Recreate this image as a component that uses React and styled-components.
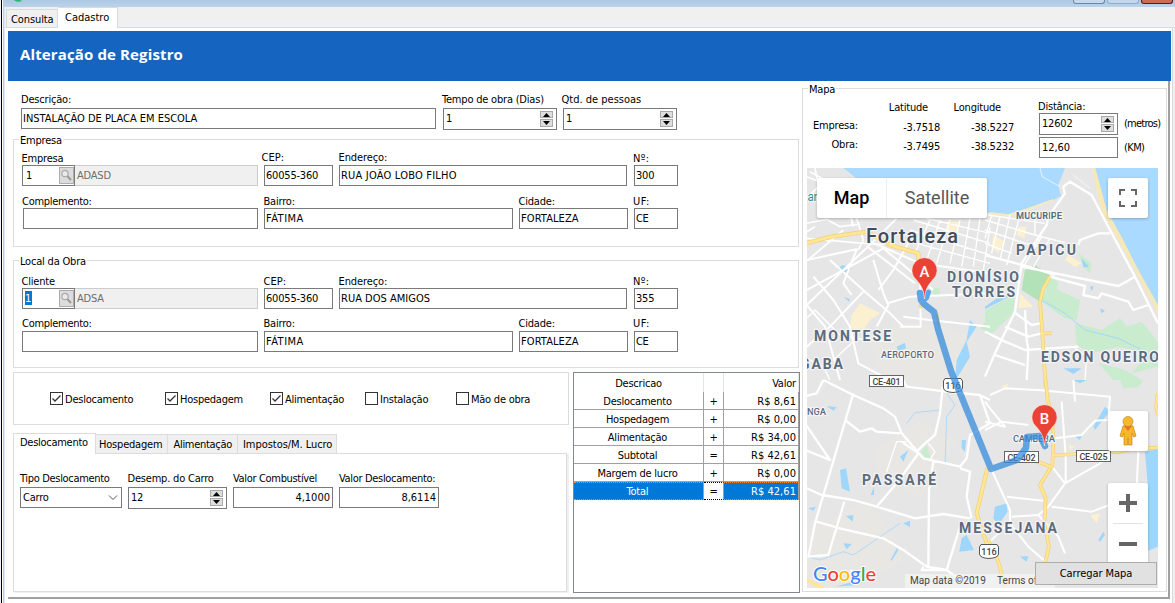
import React from "react";
import styled, { createGlobalStyle, css } from "styled-components";

const Global = createGlobalStyle`
  * { box-sizing: border-box; }
  html, body { margin: 0; padding: 0; overflow: hidden; }
  body {
    width: 1175px; height: 603px; background: #fff; color: #000;
    font: 11px/14px "DejaVu Sans Condensed", "DejaVu Sans", sans-serif;
    letter-spacing: -0.2px;
  }
`;

/* ---------- window chrome ---------- */
const Window = styled.div`
  width: 1175px; height: 603px; display: flex; overflow: hidden; background: #fff;
`;
const LeftEdge = styled.div`
  width: 5px; flex: none; border-left: 1px solid #f4f4f4;
  background: linear-gradient(90deg, #000 0 1px, #fff 1px 2px, #b9cfe4 2px 3px, #dfe6ee 3px 4px);
`;
const Main = styled.div`flex: 1; display: flex; flex-direction: column; min-width: 0;`;
const TitleBar = styled.div`
  height: 7px; flex: none; display: flex; justify-content: flex-end; align-items: flex-start;
  gap: 2px; padding-right: 2px; margin-left: -1px; background: linear-gradient(#adc8e2, #bad3eb);
`;
const AppMark = styled.svg`width: 12px; height: 3px; margin: 0 auto 0 7px;`;
const WinButton = styled.div`
  width: 32px; height: 4px; border: 1px solid ${p => p.$line}; border-top: 0;
  border-radius: 0 0 3px 3px; background: ${p => p.$fill};
`;
const TabStrip = styled.div`
  height: 21px; flex: none; display: flex; align-items: flex-end; padding-left: 1px;
  background: #f0f0f0; box-shadow: inset 0 -1px #dadada;
`;
const PageTab = styled.div`
  width: ${p => p.$w}px; height: ${p => (p.$active ? 21 : 19)}px; flex: none;
  padding: ${p => (p.$active ? "3px 0 0 7px" : "3px 0 0 4px")};
  border: 1px solid #dadada; border-bottom: ${p => (p.$active ? "0" : "1px solid #dadada")};
  border-left-width: ${p => (p.$active ? 0 : 1)}px;
  background: ${p => (p.$active ? "#fff" : "#f0f0f0")};
  font-size: 11px; letter-spacing: ${p => p.$ls}px; white-space: nowrap;
`;
const PageBody = styled.div`
  flex: 1; display: flex; flex-direction: column; padding: 3px 1px 0 3px; margin-right: 2px;
  border-right: 1px solid #dadada; background: #fff; box-shadow: 2px 0 #f0f0f0;
`;
const Banner = styled.div`
  height: 50px; flex: none; padding-left: 12px; background: #1565c0; color: #fff;
  font: bold 15px/46px "Open Sans", "Noto Sans", sans-serif; letter-spacing: 0.13px;
`;
const Content = styled.div`
  height: 518px; flex: none; display: flex; margin-right: 1px;
  border-right: 2px solid #a0a0a0; border-bottom: 2px solid #a0a0a0;
`;
const FormColumn = styled.div`width: 794px; flex: none; display: flex; flex-direction: column; padding: 11px 2px 0 5px;`;

/* ---------- form parts ---------- */
const Row = styled.div`
  display: flex; align-items: flex-start; gap: 6px;
  padding-left: ${p => p.$pad || 0}px; margin-top: ${p => p.$top || 0}px;
`;
const FieldBox = styled.div`width: ${p => p.$w}px; flex: none; margin-left: ${p => p.$gap || 0}px;`;
const Label = styled.div`
  height: ${p => p.$h || 14}px; line-height: 16px; white-space: nowrap;
  margin-left: ${p => p.$dx || 0}px; letter-spacing: ${p => p.$ls ?? -0.2}px;
  ${p => p.$raise && css`margin-top: -1px; margin-bottom: 1px;`}
`;
const Box = styled.div`
  height: ${p => (p.$tall ? 22 : 21)}px; border: 1px solid #7a7a7a; background: #fff;
  display: flex; justify-content: ${p => (p.$right ? "flex-end" : "space-between")};
  padding: 0 ${p => (p.$right ? 2 : 3)}px 0 ${p => p.$inset ?? 1}px;
  line-height: 20px; white-space: nowrap;
  letter-spacing: ${p => p.$ls ?? -0.2}px;
`;
const Group = styled.div`
  position: relative; width: 786px; height: 108px; flex: none; border: 1px solid #dcdcdc;
  margin-top: ${p => p.$top}px; padding-top: ${p => p.$pt}px;
`;
const Legend = styled.div`
  position: absolute; top: -6px; left: 5px; padding: 0 1px; background: #fff; line-height: 14px;
  letter-spacing: ${p => p.$ls ?? -0.2}px;
`;
const Joined = styled.div`display: flex;`;
const LookupBox = styled(Box)`width: 53px; padding: 0 0 0 ${p => (p.$selected ? 2 : 3)}px;`;
const Selected = styled.span`align-self: flex-start; margin-top: 2px; padding: 1px 0 0 0; width: 7px; height: 14px; line-height: 14px; background: #0078d7; color: #fff;`;
const LookupButton = styled.div`
  width: 15px; height: 17px; margin: 1px 0 0 auto; border: 1px solid #adadad; background: #dcdcdc;
  svg { display: block; }
`;
const ReadOnly = styled.div`
  width: 183px; height: 21px; border: 1px solid #ccc; border-left: 0; background: #f0f0f0;
  color: #6d6d6d; line-height: 20px; padding-left: 2px; letter-spacing: -.2px;
`;
const Spin = styled.div`display: flex; flex-direction: column; gap: 1px; padding-top: 2px;`;
const SpinButton = styled.div`
  width: 13px; height: ${p => (p.$down ? 8 : 7)}px; background: #dedede; border: 1px solid #a8a8a8;
  display: flex; justify-content: center; align-items: center;
`;

const Arrows = () => (
  <Spin>
    <SpinButton><svg width="7" height="4"><path d="M0 4L3.5 0L7 4Z" /></svg></SpinButton>
    <SpinButton $down><svg width="7" height="4"><path d="M0 0L3.5 4L7 0Z" /></svg></SpinButton>
  </Spin>
);

const Field = ({ label, value, w, gap, dx, ls, vls, h, raise, spin, inset, right }) => (
  <FieldBox $w={w} $gap={gap}>
    <Label $dx={dx} $ls={ls} $h={h} $raise={raise}>{label}</Label>
    <Box $tall={spin} $inset={inset} $right={right} $ls={vls}>
      <span>{value}</span>{spin && <Arrows />}
    </Box>
  </FieldBox>
);

const Lookup = ({ label, code, name, selected }) => (
  <FieldBox $w={236}>
    <Label $dx={-0.5}>{label}</Label>
    <Joined>
      <LookupBox $selected={selected}>
        {selected ? <Selected>{code}</Selected> : code}
        <LookupButton>
          <svg width="13" height="15" fill="none">
            <circle cx="5" cy="5.5" r="3.2" fill="#e9e9e9" stroke="#aaa" strokeWidth="1.2" />
            <path d="M7.5 8.3L11 12" stroke="#999" strokeWidth="2" />
          </svg>
        </LookupButton>
      </LookupBox>
      <ReadOnly>{name}</ReadOnly>
    </Joined>
  </FieldBox>
);

const AddressGroup = ({ title, first, address, addressLs, number, second, top, pt, pad2, w2, label2, gap2 }) => (
  <Group $top={top} $pt={pt}>
    <Legend>{title}</Legend>
    <Row $pad={8}>
      {first}
      <Field label="CEP:" value="60055-360" w={69} dx={second ? -0.5 : -2.5} ls={0} vls={-0.2} raise={!second} />
      <Field label="Endereço:" value={address} w={288} vls={addressLs} dx={-0.5} ls={-0.1} raise={!second} />
      <Field label="Nº:" value={number} w={44} gap={1} dx={-1} ls={0.3} />
    </Row>
    <Row $pad={pad2} $top={gap2}>
      <Field label="Complemento:" w={w2} h={label2} dx={second ? 0 : -1} ls={-0.28} />
      <Field label="Bairro:" value="FÁTIMA" w={249} h={label2} dx={-0.5} vls={0.5} />
      <Field label="Cidade:" value="FORTALEZA" w={109} h={label2} dx={-0.5} vls={0.1} />
      <Field label="UF:" value="CE" w={44} h={label2} dx={-1} ls={0.5} vls={-0.4} />
    </Row>
  </Group>
);

/* ---------- lower area ---------- */
const Lower = styled.div`display: flex; gap: 4px; margin-top: 4px;`;
const LowerLeft = styled.div`width: 556px; flex: none;`;
const Checks = styled.div`
  height: 53px; border: 1px solid #dcdcdc; padding: 19px 0 0 36px;
  display: grid; grid-template-columns: 115px 105px 95px 91px 90px; align-items: start;
`;
const Check = styled.div`
  display: flex; gap: 2px; line-height: 16px; white-space: nowrap; letter-spacing: -0.24px;
  svg { width: 13px; height: 13px; flex: none; }
`;
const SubTabs = styled.div`display: flex; align-items: flex-end; height: 21px; margin-top: 7px;`;
const SubTab = styled.div`
  width: ${p => p.$w}px; height: ${p => (p.$active ? 21 : 19)}px; flex: none; white-space: nowrap;
  border: 1px solid #dcdcdc; border-left-width: ${p => (p.$active ? 1 : 0)}px;
  border-bottom: 0; margin-bottom: ${p => (p.$active ? -1 : 0)}px;
  padding: ${p => (p.$active ? 2 : 3)}px 0 0 ${p => p.$pl}px; background: ${p => (p.$active ? "#fff" : "#f0f0f0")};
  position: relative; letter-spacing: ${p => p.$ls ?? -0.2}px;
`;
const SubPanel = styled.div`
  width: 554px; height: 139px; border: 1px solid #dcdcdc; padding-top: 17px; box-shadow: 2px 1px #f0f0f0;
`;
const Combo = styled(Box)`padding-right: 3px; svg { margin-top: 6px; }`;

const Table = styled.div`
  width: 227px; height: 221px; border: 1px solid #828790; display: flex; flex-direction: column;
`;
const TRow = styled.div`
  display: grid; grid-template-columns: 130px 20px 75px; grid-template-rows: 100%;
  height: ${p => (p.$head ? 19 : 18)}px; flex: none;
`;
const Cell = styled.div`
  text-align: ${p => p.$align || "center"}; white-space: nowrap; line-height: ${p => (p.$head ? 18 : 19)}px;
  letter-spacing: ${p => (p.$align ? (p.$head ? -0.2 : 0.05) : -0.22)}px;
  border-right: 1px solid ${p => (p.$head ? "#e5e5e5" : "#a0a0a0")};
  border-bottom: ${p => (p.$head ? "0" : "1px solid #a0a0a0")};
  padding: ${p => (p.$head ? "2px" : "0")} ${p => (p.$align ? 2 : p.$head ? 0 : 2)}px 0 0;
  background: ${p => (p.$selected ? "#0078d7" : "#fff")}; color: ${p => (p.$selected ? "#fff" : "#000")};
  ${p => p.$focus && css`
    border-bottom: 1px dotted ${p.$focus}; box-shadow: none; line-height: 17px;
    border-top: 1px dotted ${p.$focus}; background-clip: border-box;
  `}
`;
const Sign = styled(Cell)`padding-right: 0;`;

/* ---------- map ---------- */
const MapGroup = styled.div`
  position: relative; width: 365px; height: 504px; margin-top: 7px; flex: none;
  border: 1px solid #dcdcdc; padding-left: 4px; display: flex; flex-direction: column;
`;
const MapInfo = styled.div`display: flex; height: 79px; flex: none;`;
const InfoCol = styled.div`
  width: ${p => p.$w}px; flex: none; text-align: right; padding-top: ${p => p.$top}px; white-space: nowrap;
`;
const InfoText = styled.div`
  height: ${p => p.$h || 19}px; line-height: 16px; padding-right: ${p => p.$pr || 0}px; letter-spacing: ${p => p.$ls ?? -0.2}px;
`;
const DistanceCol = styled.div`width: 79px; margin-left: 25px; padding-top: 10px; flex: none;`;
const UnitCol = styled(InfoCol)`text-align: left; margin-left: 6px;`;
const MapFrame = styled.div`
  position: relative; width: 351px; height: 420px; overflow: hidden; background: #e6e6e6; flex: none;
  letter-spacing: 0;
`;
const MapSvg = styled.svg`display: block; width: 351px; height: 420px;`;
const Control = styled.div`
  position: absolute; left: ${p => p.$x}px; top: ${p => p.$y}px; width: ${p => p.$w || 40}px; height: ${p => p.$h || 40}px;
  background: #fff; border-radius: 2px; box-shadow: 0 1px 3px rgba(0,0,0,.25);
  display: flex; align-items: center; justify-content: center;
`;
const MapType = styled.div`
  width: ${p => p.$w}px; text-align: center;
  font: ${p => (p.$on ? 500 : 400)} 18px/40px Roboto, sans-serif; color: ${p => (p.$on ? "#000" : "#565656")};
  border-right: ${p => (p.$on ? "1px solid #eee" : "0")};
`;
const Attribution = styled.div`
  position: absolute; left: 98px; bottom: 0; width: 150px; height: 14px; display: flex; gap: 11px;
  padding-left: 5px; background: rgba(245,245,245,.7); color: #444; white-space: nowrap;
  font: 10px/14px Roboto, sans-serif; letter-spacing: .08px;
`;
const LoadButton = styled.button`
  position: absolute; left: 228px; top: 394px; width: 122px; height: 23px; padding: 1px 0 0; border: 1px solid #adadad;
  background: #e1e1e1; font: inherit; letter-spacing: -0.05px; color: #000;
`;

const Quad = ({ x, y, children }) => (
  <g transform={`translate(${x} ${y}) scale(.33333)`}>{children}</g>
);
const Road = ({ d, w = 6 }) => <path d={d} stroke="#fff" strokeWidth={w} fill="none" strokeLinejoin="round" />;
const Highway = ({ d, w = 11 }) => (
  <>
    <path d={d} stroke="#f3cf70" strokeWidth={w} fill="none" strokeLinejoin="round" />
    <path d={d} stroke="#ffe694" strokeWidth={w - 4} fill="none" strokeLinejoin="round" />
  </>
);
const Place = ({ x, y, w, size = 13, color = "#5b6b7e", weight = 700, children }) => (
  <text x={x} y={y} textLength={w} fontSize={size} fontWeight={weight} fill={color}
    stroke="#f4f4f4" strokeWidth="2.5" strokeLinejoin="round" paintOrder="stroke">{children}</text>
);
const Shield = ({ x, y, w, children }) => (
  <g>
    <rect x={x + .5} y={y + .5} width={w - 1} height="11" fill="#fff" stroke="#666" />
    <text x={x + w / 2} y={y + 9.5} fontSize="9" textAnchor="middle" textLength={w - 7} fill="#444" fontWeight="500">{children}</text>
  </g>
);
const RoundShield = ({ x, y }) => (
  <g>
    <path d={`M${x + 2} ${y + .5}H${x + 18}L${x + 19.5} ${y + 3}V${y + 10}Q${x + 19} ${y + 14} ${x + 10} ${y + 14.5}Q${x + 1} ${y + 14} ${x + .5} ${y + 10}V${y + 3}Z`} fill="#fff" stroke="#555" />
    <text x={x + 10} y={y + 10.8} fontSize="9" textAnchor="middle" fill="#444" fontWeight="500">116</text>
  </g>
);
const Pin = ({ x, y, children }) => (
  <g transform={`translate(${x} ${y})`}>
    <path d="M0 0C-1-10-3-13-8-19A12.6 12.6 0 1 1 8-19C3-13 1-10 0 0Z" fill="#ea4335" stroke="#fff" strokeWidth=".5" />
    <text y="-22" fontSize="15" fontWeight="500" fill="#fff" textAnchor="middle">{children}</text>
  </g>
);

const RouteMap = () => (
  <MapSvg viewBox="807 168 351 420" fontFamily="Roboto, sans-serif">
    <rect x="807" y="168" width="351" height="420" fill="#e6e6e6" />
    {/* airport and built-up shading */}
    <path d="M868 340L900 322L945 327L975 337L958 400L880 372Z M875 450L920 420L960 440L920 500L880 480Z M807 530L870 500L905 560L850 588H807Z" fill="#e9e7e3" />
    <Quad x={985} y={160}>
      <path d="M0 24H240L220 75L228 108L190 128L130 147L70 165L0 157Z" fill="#aadaff" />
      <path d="M0 158L70 166L130 147L205 120" stroke="#f7eac3" strokeWidth="7" fill="none" />
      <path d="M321 24H519V462L455 342L396 235L346 145Z" fill="#f7e8b9" />
      <path d="M331 24H519V435L455 320L412 235L365 150Z" fill="#aadaff" />
      <path d="M120 330L150 315L195 345L165 425L110 390Z" fill="#b3e1b8" />
      <path d="M195 352L220 365L215 388L285 420L275 480L240 475L170 425ZM280 280L320 310L315 340L295 320Z M0 450L90 405L85 460L10 530L0 515ZM270 490L350 510L405 475L425 500L470 485L519 545V620L440 640L490 580L400 560L320 580L275 555Z M340 610L420 630L470 660H385Z" fill="#c9ebce" />
      <path d="M25 225L60 245L40 280L20 260ZM100 200L125 200L118 235L95 225ZM250 285L290 310L270 320L240 300ZM105 400L145 440L100 445Z" fill="#fbf0cf" />
      <path d="M290 295L312 320L295 322ZM315 380L326 378L320 394ZM345 445L360 452L350 460ZM222 517L245 525ZM235 625L290 625L265 642ZM0 440L45 408L90 402L0 447Z" fill="#9ed4f9" />
      <path d="M170 420L240 460L300 510L400 535L470 570L519 600" stroke="#a5d8fb" strokeWidth="3" fill="none" />
    </Quad>
    <Quad x={800} y={160}>
      <path d="M130 24H570V158L440 160L420 130L250 100L165 52Z" fill="#aadaff" />
      <path d="M112 325L128 315L155 325L130 342ZM290 560L315 548L318 565L295 575ZM470 600L500 540L510 480L530 500L500 545L510 590L480 640L465 660ZM130 410L150 418L148 425Z" fill="#9fd6fb" />
      <path d="M395 385L418 385L420 400L400 408Z M540 505L570 470V520Z" fill="#c9ebce" />
      <path d="M180 430L240 460L210 480L185 520L150 500L155 465ZM440 185L480 185L470 215L440 210Z" fill="#fbf0cf" />
      <Road w={5} d="M20 115L75 60L30 35M20 50L110 85M45 24L52 60M20 190L80 178L120 200L180 192M20 215L45 200M0 320L130 210M20 235L190 250L280 255M165 160L190 240L175 270" />
      <Road w={6} d="M20 435L230 235L290 175M20 390L250 265L400 390M0 430L20 435L75 500L120 660M90 300L200 400L265 455L310 500M40 350L100 420L150 500L175 610L260 655M20 300L170 268L130 370L155 405M200 258L345 370M220 300L250 400L265 435L230 500M235 390L280 330L330 240M262 430L330 410L570 400M360 300L362 500L300 500M310 470L390 480L570 500M200 240L360 310L570 340M160 200L150 160M20 560L90 500L190 395" />
      <Road w={4} d="M390 180L345 280M420 180L380 300M450 180L410 310M480 180L450 310M510 175L485 320M540 175L520 320M570 200L550 330M340 180L570 250M330 210L570 285M350 250L570 310M380 175L570 220M20 475L45 450L120 525L200 540L280 545M100 600L160 545M20 595L70 620L90 660" />
      <Highway d="M18 250L95 230L200 215L270 255L355 280L357 320" w={13} />
      <Highway d="M360 430L362 445M412 460L415 500" w={7} />
    </Quad>
    <Quad x={985} y={160}>
      <Road w={7} d="M240 105L235 80L255 65L320 105L375 210L450 350L519 490M240 100L190 170L185 195L110 310L90 455L30 580L0 650M375 220L340 220L285 240L280 255M110 320L400 378L450 350M195 350L300 378L295 405L340 415L350 400L430 425L445 450L490 435M85 455L140 495L165 490M60 500L130 530L170 520M0 515L60 545L120 570L280 560M120 450L125 540L130 570L125 660M30 585L120 615M0 285L130 320L210 345" />
      <Road w={4} d="M0 180L150 225L240 248M0 210L120 250L190 265M20 165L0 235M45 168L20 280M75 165L45 300M105 165L65 315M150 155V225M170 230L115 320M195 235L140 330M0 250L80 280M10 165L180 190M270 565L305 590L300 660" />
      <path d="M165 24L172 50L225 80M265 45L315 85" stroke="#fff" strokeWidth="2" fill="none" />
      <Highway d="M195 350L175 385L165 425L172 520L182 680M172 520H200" />
    </Quad>
    <Quad x={800} y={380}>
      <path d="M120 270L138 265L150 335L125 325ZM300 230L325 210L310 245ZM485 180L498 180L495 215L485 205ZM478 515L485 475L500 465L522 510ZM130 490L155 492L140 508ZM138 408L160 405L158 425ZM272 540L290 505L295 510L275 543ZM212 345L222 320V345ZM80 78L110 82L100 92ZM310 430L330 422V442ZM25 385L48 380L40 392Z M105 620L160 605L170 615Z" fill="#9fd6fb" />
      <path d="M362 215L380 195L392 235L375 235Z" fill="#c9ebce" />
      <path d="M320 130L345 98L420 90M440 40L465 75L440 110L435 250M20 530L60 540L130 515L160 525L300 430" stroke="#aedafb" strokeWidth="3" fill="none" />
      <Road w={7} d="M70 0L160 45L250 85L285 110L305 160L370 235L480 260L500 235L510 165L570 130M350 215L375 190L405 165L420 100L428 20M160 40L45 430L25 530L85 525L133 365M20 325L65 345L160 360L230 380L345 415L430 402L510 415M230 380L290 310L355 220L305 185M50 425L120 445L250 475L310 510L380 560L440 570L480 440M385 560L387 330L400 245M135 120L180 155L215 145L230 155L300 160M15 130L90 240L15 210M70 0L50 40L10 50M310 0L320 20L440 35L540 45L570 60M540 45L570 130M370 560L365 570L440 570L480 600M480 265L510 275L500 350L515 415" />
      <Road w={4} d="M260 275L290 185H320M150 570L200 590M385 190L405 215L390 240" />
      <Highway d="M562 265L530 400L550 460L560 490" w={12} />
      <path d="M20 600L70 625" stroke="#ffe694" strokeWidth="10" />
    </Quad>
    <Quad x={985} y={380}>
      <path d="M30 380L65 370L68 395L40 435L25 415ZM480 215L519 205V350L490 340ZM360 80L375 92L330 150L325 140ZM340 480L355 455L360 465L345 485ZM270 170L290 165L285 180ZM475 460L485 330L519 330V500L470 520ZM105 530L130 528L125 545ZM260 0L305 0L285 10Z" fill="#9fd6fb" />
      <path d="M405 0H475L460 22L415 25Z" fill="#c9ebce" />
      <path d="M315 405L345 400L335 430ZM250 195L270 200L255 210ZM45 20L70 10L65 25Z" fill="#fbf0cf" />
      <Road w={6} d="M0 65L15 85L60 140L0 125M15 45L60 25L160 30L375 50L370 120L330 122L290 165L210 175M230 65L242 230V310M0 150L50 125L130 135M20 270L75 390L75 430L130 500L200 560M205 265L240 310L190 380L160 405L80 410M240 310L345 250L375 220M65 350L175 362M200 380L320 395L400 365M160 405L220 470L240 520M75 425L0 500M460 215L455 320L440 400M270 65L265 0" />
      <Highway d="M182 0L188 60L200 100L205 180L202 255L165 315L182 355L178 430L192 500L178 560M200 225L300 222L405 215L450 205L519 203" />
      <Highway d="M110 222L150 242L202 262M10 480L40 545L60 620M519 40L513 80L519 105" />
    </Quad>

    <Shield x={869} y={375} w={35}>CE-401</Shield>
    <Shield x={1004} y={451} w={35}>CE-402</Shield>
    <Shield x={1076} y={450} w={35}>CE-025</Shield>
    <RoundShield x={943} y={378} />
    <RoundShield x={979} y={544} />
    <Place x={1013} y={442} w={42} size={9.5} weight={500}>CAMBEBA</Place>

    {/* driving route */}
    <path d="M920 293L921 300L924 304L934 312L938 329L951 371L991 469L1017 460L1026 448L1027 437L1040 436L1045 446" fill="none" stroke="#348bdc" strokeOpacity=".75" strokeWidth="6.5" strokeLinejoin="round" strokeLinecap="round" />
    <path d="M928.500 292L926.500 298L923 300L920 293" fill="none" stroke="#5aa6ee" strokeWidth="5" strokeLinecap="round" strokeLinejoin="round" />

    <Place x={807.5} y={201} w={10} size={12} color="#2a9297" weight={400}>ar</Place>
    <Place x={866} y={243} w={92} size={20} color="#414b57" weight={500}>Fortaleza</Place>
    <Place x={1016} y={218.5} w={46} size={9.5}>MUCURIPE</Place>
    <Place x={1016} y={255} w={60} size={14}>PAPICU</Place>
    <Place x={947} y={282} w={72} size={14}>DIONÍSIO</Place>
    <Place x={952} y={297} w={63} size={14}>TORRES</Place>
    <Place x={814} y={341} w={77} size={14}>MONTESE</Place>
    <Place x={881} y={358} w={53} size={9.5} weight={500}>AEROPORTO</Place>
    <Place x={800} y={369} w={43} size={14}>GABA</Place>
    <Place x={1041} y={362} w={118} size={14}>EDSON QUEIRO</Place>
    <Place x={807} y={415} w={19} size={9.5} weight={500}>NGA</Place>
    <Place x={862} y={485} w={74} size={14}>PASSARÉ</Place>
    <Place x={959} y={533} w={98} size={14}>MESSEJANA</Place>
    <Pin x={924.5} y={299}>A</Pin>
    <Pin x={1044.5} y={446}>B</Pin>

    <text x="813" y="581" fontSize="20" fontWeight="500" fontFamily="Lato, sans-serif" textLength="63" stroke="#fff" strokeWidth="2" paintOrder="stroke">
      <tspan fill="#4285f4">G</tspan><tspan fill="#ea4335">o</tspan><tspan fill="#fbbc05">o</tspan>
      <tspan fill="#4285f4">g</tspan><tspan fill="#34a853">l</tspan><tspan fill="#ea4335">e</tspan>
    </text>
  </MapSvg>
);

const checks = [["Deslocamento", 1], ["Hospedagem", 1], ["Alimentação", 1], ["Instalação", 0], ["Mão de obra", 0]];
const totals = [
  ["Deslocamento", "+", "R$ 8,61"],
  ["Hospedagem", "+", "R$ 0,00"],
  ["Alimentação", "+", "R$ 34,00"],
  ["Subtotal", "=", "R$ 42,61"],
  ["Margem de lucro", "+", "R$ 0,00"],
  ["Total", "=", "R$ 42,61"],
];

export default function App() {
  return (
    <Window>
      <Global />
      <LeftEdge />
      <Main>
        <TitleBar>
          <AppMark viewBox="0 0 12 3"><path d="M3 0C5 2 9 2.6 11 .5L8 0Z" fill="#2bb673" /></AppMark>
          <WinButton $line="#6c87a5" $fill="#c6d9ec" />
          <WinButton $line="#93abc6" $fill="#c3d7eb" />
          <WinButton $line="#5c1720" $fill="#cf6a59" />
        </TitleBar>
        <TabStrip>
          <PageTab $w={52} $ls={-0.1}>Consulta</PageTab>
          <PageTab $w={60} $ls={0} $active>Cadastro</PageTab>
        </TabStrip>
        <PageBody>
          <Banner>Alteração de Registro</Banner>
          <Content>
            <FormColumn>
              <Row $pad={8}>
                <Field label="Descrição:" value="INSTALAÇÃO DE PLACA EM ESCOLA" w={415} h={16} vls={-0.03} />
                <Field label="Tempo de obra (Dias)" value="1" w={114} gap={1} h={16} dx={-1} spin inset={2} />
                <Field label="Qtd. de pessoas" value="1" w={114} h={16} dx={-1.5} ls={0} spin inset={2} />
              </Row>
              <AddressGroup title="Empresa" top={9} pt={11} address="RUA JOÃO LOBO FILHO" addressLs={0.2} number="300"
                first={<Lookup label="Empresa" code="1" name="ADASD" />} pad2={9} w2={235} label2={14} gap2={8} />
              <AddressGroup title="Local da Obra" top={13} pt={13} address="RUA DOS AMIGOS" addressLs={0.02} number="355" second
                first={<Lookup label="Cliente" code="1" name="ADSA" selected />} pad2={8} w2={236} label2={15} gap2={7} />
              <Lower>
                <LowerLeft>
                  <Checks>
                    {checks.map(([name, on]) => (
                      <Check key={name}>
                        <svg viewBox="0 0 13 13" fill="none" stroke="#333">
                          <rect x=".5" y=".5" width="12" height="12" fill="#fff" />
                          {on ? <path d="M2.5 6.5L5 9L10.5 3.5" strokeWidth="1.3" /> : null}
                        </svg>
                        {name}
                      </Check>
                    ))}
                  </Checks>
                  <SubTabs>
                    <SubTab $w={83} $pl={6} $ls={-0.28} $active>Deslocamento</SubTab>
                    <SubTab $w={72} $pl={3}>Hospedagem</SubTab>
                    <SubTab $w={70} $pl={5.5} $ls={-0.3}>Alimentação</SubTab>
                    <SubTab $w={99} $pl={5} $ls={-0.05}>Impostos/M. Lucro</SubTab>
                  </SubTabs>
                  <SubPanel>
                    <Row $pad={6}>
                      <FieldBox $w={102}>
                        <Label $h={16} $ls={-0.33}>Tipo Deslocamento</Label>
                        <Combo $inset={2}>
                          <span>Carro</span>
                          <svg width="10" height="8" fill="none" stroke="#555"><path d="M1 1.5L5 5.5L9 1.5" /></svg>
                        </Combo>
                      </FieldBox>
                      <Field label="Desemp. do Carro" value="12" w={99} h={16} spin inset={2} dx={-0.5} />
                      <Field label="Valor Combustível" value="4,1000" w={100} h={16} vls={0} ls={-0.33} right />
                      <Field label="Valor Deslocamento:" value="8,6114" w={100} h={16} vls={0} ls={-0.33} right />
                    </Row>
                  </SubPanel>
                </LowerLeft>
                <Table>
                  <TRow $head><Cell $head>Descricao</Cell><Cell $head /><Cell $head $align="right">Valor</Cell></TRow>
                  {totals.map(([name, sign, amount]) => {
                    const sel = name === "Total";
                    return (
                      <TRow key={name}>
                        <Cell $selected={sel} $focus={sel && "#ff8728"}>{name}</Cell>
                        <Sign $focus={sel && "#000"}>{sign}</Sign>
                        <Cell $selected={sel} $focus={sel && "#ff8728"} $align="right">{amount}</Cell>
                      </TRow>
                    );
                  })}
                </Table>
              </Lower>
            </FormColumn>
            <MapGroup>
              <Legend>Mapa</Legend>
              <MapInfo>
                <InfoCol $w={51} $top={29}><InfoText>Empresa:</InfoText><InfoText>Obra:</InfoText></InfoCol>
                <InfoCol $w={82} $top={11}>
                  <InfoText $h={20} $pr={12}>Latitude</InfoText><InfoText>-3.7518</InfoText><InfoText>-3.7495</InfoText>
                </InfoCol>
                <InfoCol $w={74} $top={11}>
                  <InfoText $h={20} $pr={13}>Longitude</InfoText><InfoText>-38.5227</InfoText><InfoText>-38.5232</InfoText>
                </InfoCol>
                <DistanceCol>
                  <Label $dx={-1}>Distância:</Label>
                  <Box $tall $inset={2}><span>12602</span><Arrows /></Box>
                  <Row $top={2}><FieldBox $w={79}><Box $inset={2} $ls={-0.1}>12,60</Box></FieldBox></Row>
                </DistanceCol>
                <UnitCol $w={36} $top={27}><InfoText $h={24} $ls={-0.75}>(metros)</InfoText><InfoText $ls={-0.6}>(KM)</InfoText></UnitCol>
              </MapInfo>
              <MapFrame>
                <RouteMap />
                <Control $x={10} $y={10} $w={170}><MapType $w={70} $on>Map</MapType><MapType $w={100}>Satellite</MapType></Control>
                <Control $x={301} $y={10}>
                  <svg width="18" height="18" fill="none" stroke="#666" strokeWidth="2"><path d="M1 6V1H6M12 1H17V6M17 12V17H12M6 17H1V12" /></svg>
                </Control>
                <Control $x={301} $y={243}>
                  <svg width="18" height="32" viewBox="0 0 18 32">
                    <path d="M4 11Q9 9 14 11L17 21L14.500 22L13 18V30H9.500V23H8.500V30H5V18L3.500 22L1 21Z" fill="#fbb72c" stroke="#c98613" strokeWidth=".7" />
                    <path d="M5 11L9 16L13 11Z" fill="#e8762c" />
                    <circle cx="9" cy="6.500" r="5" fill="#fbb72c" stroke="#b98a35" strokeWidth=".7" />
                  </svg>
                </Control>
                <Control $x={301} $y={315} $h={82}>
                  <svg width="30" height="82" stroke="#666" strokeWidth="4"><path d="M6 20H24M15 11V29M6 61H24" /><path d="M0 40.500H30" stroke="#e3e3e3" strokeWidth="1" /></svg>
                </Control>
                <Attribution><span>Map data ©2019</span><span>Terms of Use</span></Attribution>
                <LoadButton>Carregar Mapa</LoadButton>
              </MapFrame>
            </MapGroup>
          </Content>
        </PageBody>
      </Main>
    </Window>
  );
}
